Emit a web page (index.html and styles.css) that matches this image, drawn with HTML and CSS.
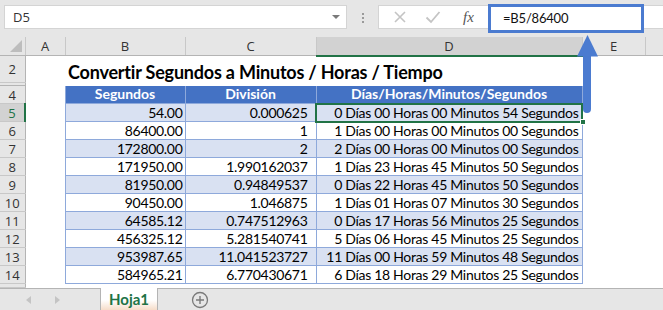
FILE: index.html
```html
<!DOCTYPE html>
<html lang="es">
<head>
    <meta charset="UTF-8">
    <title>Convertir Segundos</title>
    <link rel="stylesheet" href="styles.css">
</head>
<body>
    <div class="app">
        <div class="formula-bar">
            <div class="name-box">
                <span>D5</span>
                <span class="caret"></span>
            </div>
            <div class="grip"><i></i><i></i><i></i></div>
            <div class="fx-box">
                <svg width="14" height="14" viewBox="0 0 14 14"><path d="M2 2L12 12M12 2L2 12" stroke="#c4c4c4" stroke-width="1.6" fill="none"/></svg>
                <svg width="16" height="14" viewBox="0 0 16 14"><path d="M1.5 7.5L6 12L14.5 2" stroke="#c4c4c4" stroke-width="1.8" fill="none"/></svg>
                <span class="fx">fx</span>
            </div>
            <div class="formula-input">=B5/86400</div>
            <div class="formula-rest"></div>
        </div>

        <table class="sheet">
            <colgroup>
                <col class="c-rh"><col class="c-a"><col class="c-b"><col class="c-c"><col class="c-d"><col class="c-e"><col class="c-f">
            </colgroup>
            <tr class="col-heads">
                <th class="corner"><span class="tri"></span></th>
                <th>A</th><th>B</th><th>C</th><th class="active-col">D</th><th>E</th><th></th>
            </tr>
            <tr class="r-title">
                <th class="rh">2</th><td></td>
                <td class="title" colspan="3"><span>Convertir Segundos a Minutos / Horas / Tiempo</span></td>
                <td></td><td></td>
            </tr>
            <tr class="r-hidden"><th class="rh"></th><td colspan="6"></td></tr>
            <tr class="r-std">
                <th class="rh">4</th><td></td>
                <td class="tb-head">Segundos</td><td class="tb-head">División</td><td class="tb-head">Días/Horas/Minutos/Segundos</td>
                <td></td><td></td>
            </tr>
            <tr class="r-std band">
                <th class="rh active-row">5</th><td></td>
                <td class="num">54.00</td><td class="num div">0.000625</td><td class="num txt sel">0 Días 00 Horas 00 Minutos 54 Segundos<span class="handle"></span></td>
                <td></td><td></td>
            </tr>
            <tr class="r-std">
                <th class="rh">6</th><td></td>
                <td class="num">86400.00</td><td class="num div">1</td><td class="num txt">1 Días 00 Horas 00 Minutos 00 Segundos</td>
                <td></td><td></td>
            </tr>
            <tr class="r-std band">
                <th class="rh">7</th><td></td>
                <td class="num">172800.00</td><td class="num div">2</td><td class="num txt">2 Días 00 Horas 00 Minutos 00 Segundos</td>
                <td></td><td></td>
            </tr>
            <tr class="r-std">
                <th class="rh">8</th><td></td>
                <td class="num">171950.00</td><td class="num div">1.990162037</td><td class="num txt">1 Días 23 Horas 45 Minutos 50 Segundos</td>
                <td></td><td></td>
            </tr>
            <tr class="r-std band">
                <th class="rh">9</th><td></td>
                <td class="num">81950.00</td><td class="num div">0.94849537</td><td class="num txt">0 Días 22 Horas 45 Minutos 50 Segundos</td>
                <td></td><td></td>
            </tr>
            <tr class="r-std">
                <th class="rh">10</th><td></td>
                <td class="num">90450.00</td><td class="num div">1.046875</td><td class="num txt">1 Días 01 Horas 07 Minutos 30 Segundos</td>
                <td></td><td></td>
            </tr>
            <tr class="r-std band">
                <th class="rh">11</th><td></td>
                <td class="num">64585.12</td><td class="num div">0.747512963</td><td class="num txt">0 Días 17 Horas 56 Minutos 25 Segundos</td>
                <td></td><td></td>
            </tr>
            <tr class="r-std">
                <th class="rh">12</th><td></td>
                <td class="num">456325.12</td><td class="num div">5.281540741</td><td class="num txt">5 Días 06 Horas 45 Minutos 25 Segundos</td>
                <td></td><td></td>
            </tr>
            <tr class="r-std band">
                <th class="rh">13</th><td></td>
                <td class="num">953987.65</td><td class="num div">11.041523727</td><td class="num txt">11 Días 00 Horas 59 Minutos 48 Segundos</td>
                <td></td><td></td>
            </tr>
            <tr class="r-std">
                <th class="rh">14</th><td></td>
                <td class="num">584965.21</td><td class="num div">6.770430671</td><td class="num txt">6 Días 18 Horas 29 Minutos 25 Segundos</td>
                <td></td><td></td>
            </tr>
            <tr class="r-tail"><th class="rh"></th><td colspan="6"></td></tr>
        </table>

        <div class="tabs">
            <div class="tab-nav">
                <span class="nav-l"></span>
                <span class="nav-r"></span>
            </div>
            <div class="tab-active">Hoja1</div>
            <div class="tab-add">
                <svg width="18" height="18" viewBox="0 0 18 18">
                    <circle cx="9" cy="9" r="7.5" stroke="#7a7a7a" stroke-width="1.3" fill="none"/>
                    <path d="M9 5V13M5 9H13" stroke="#7a7a7a" stroke-width="1.4"/>
                </svg>
            </div>
        </div>

        <svg class="arrow" width="26" height="84" viewBox="0 0 26 84">
            <rect x="8" y="18" width="8" height="62" rx="4" fill="#4b7bd0"/>
            <polygon points="12.5,2 2,23.5 23,23.5" fill="#4b7bd0"/>
        </svg>
    </div>
</body>
</html>
```

FILE: styles.css
```css
* {
    margin: 0;
    padding: 0;
    box-sizing: border-box;
}

body {
    font-family: Lato, "Open Sans", sans-serif;
    background: #ffffff;
    color: #000000;
    width: 663px;
    height: 310px;
    overflow: hidden;
}

.app {
    position: relative;
    width: 663px;
    height: 310px;
    display: flex;
    flex-direction: column;
}

/* formula bar */

.formula-bar {
    display: flex;
    align-items: flex-start;
    height: 40px;
    background: #e6e6e6;
    padding-top: 4px;
}

.name-box {
    display: flex;
    align-items: center;
    justify-content: space-between;
    margin: 1px 0 0 4px;
    width: 343px;
    height: 24px;
    padding: 0 6px 0 8px;
    background: #ffffff;
    border: 1px solid #d4d4d4;
    font-family: "Open Sans", sans-serif;
    font-size: 13px;
    color: #333333;
}

.caret {
    width: 0;
    height: 0;
    border-left: 4px solid transparent;
    border-right: 4px solid transparent;
    border-top: 4px solid #7a7a7a;
}

.grip {
    display: flex;
    flex-direction: column;
    gap: 2px;
    width: 31px;
    align-items: center;
    padding-top: 9px;
}

.grip i {
    width: 2px;
    height: 2px;
    background: #9a9a9a;
}

.fx-box {
    display: flex;
    align-items: center;
    width: 110px;
    height: 24px;
    margin-top: 1px;
    padding-left: 14px;
    gap: 18px;
    background: #ffffff;
    border: 1px solid #d4d4d4;
    border-right: none;
}

.fx {
    font-family: "Liberation Serif", serif;
    font-style: italic;
    font-size: 15px;
    color: #555555;
    margin-left: 4px;
}

.formula-input {
    width: 156px;
    height: 29px;
    border: 3px solid #4b7bd0;
    background: #ffffff;
    padding-left: 12px;
    font-size: 13px;
    letter-spacing: -0.2px;
    line-height: 22px;
    color: #111111;
}

.formula-rest {
    flex: 1;
    height: 24px;
    margin-top: 1px;
    background: #ffffff;
    border-top: 1px solid #d4d4d4;
    border-bottom: 1px solid #d4d4d4;
}

/* grid */

.sheet {
    table-layout: fixed;
    border-collapse: collapse;
    width: 663px;
}

.c-rh { width: 25px; }
.c-a { width: 40px; }
.c-b { width: 120px; }
.c-c { width: 131px; }
.c-d { width: 266px; }
.c-e { width: 63px; }
.c-f { width: 18px; }

.sheet th {
    font-weight: normal;
    font-family: "Open Sans", sans-serif;
    font-size: 13px;
    color: #333333;
    background: #e6e6e6;
}

.col-heads {
    height: 19px;
}

.col-heads th {
    border-right: 1px solid #c8c8c8;
    border-bottom: 1px solid #b4b4b4;
    line-height: 18px;
}

.corner {
    position: relative;
}

.tri {
    position: absolute;
    right: 3px;
    bottom: 3px;
    width: 0;
    height: 0;
    border-left: 12px solid transparent;
    border-bottom: 12px solid #bdbdbd;
}

.col-heads .active-col {
    background: #d2d2d2;
    border-bottom: 2px solid #217346;
}

.rh {
    border-right: 1px solid #b4b4b4;
    border-bottom: 1px solid #c8c8c8;
    text-align: center;
    line-height: 16px;
}

.sheet th.active-row {
    background: #d2d2d2;
    border-right: 2px solid #217346;
    color: #217346;
}

.r-title { height: 24px; }
.r-hidden { height: 3px; }
.r-std { height: 18px; }
.r-tail { height: 4px; }

.r-hidden .rh {
    border-bottom: 1px solid #b4b4b4;
}

.sheet td {
    font-size: 14px;
    letter-spacing: -0.3px;
    line-height: 16px;
    white-space: nowrap;
    padding: 0;
}

.sheet td.title {
    overflow: visible;
    padding-left: 3px;
    font-size: 18px;
    letter-spacing: -0.2px;
    font-weight: bold;
}

.title span {
    display: block;
    line-height: 22px;
    padding-top: 4px;
}

.sheet td.tb-head {
    background: #4472c4;
    color: #ffffff;
    font-weight: bold;
    text-align: center;
    letter-spacing: 0;
    border-left: 1px solid #8ea9db;
    border-right: 1px solid #8ea9db;
}

.sheet td.num {
    text-align: right;
    padding-right: 2px;
    border: 1px solid #8ea9db;
}

.sheet td.div {
    padding-right: 8px;
}

.sheet td.txt {
    padding-right: 3px;
}

.band .num {
    background: #d9e1f2;
}

.sel {
    position: relative;
    outline: 2px solid #217346;
    outline-offset: -1px;
}

.handle {
    position: absolute;
    right: -4px;
    bottom: -4px;
    width: 6px;
    height: 6px;
    background: #217346;
    border: 1px solid #ffffff;
}

/* sheet tabs */

.tabs {
    flex: 1;
    display: flex;
    align-items: stretch;
    background: #e6e6e6;
    border-top: 1px solid #b4b4b4;
}

.tab-nav {
    width: 100px;
    display: flex;
    align-items: center;
    padding-left: 26px;
    gap: 24px;
}

.nav-l, .nav-r {
    width: 0;
    height: 0;
    border-top: 4px solid transparent;
    border-bottom: 4px solid transparent;
}

.nav-l { border-right: 5px solid #c4c4c4; }
.nav-r { border-left: 5px solid #c4c4c4; }

.tab-active {
    width: 58px;
    margin-top: -1px;
    text-align: center;
    font-size: 15px;
    font-weight: bold;
    line-height: 22px;
    color: #217346;
    background: linear-gradient(#ffffff 55%, #f6dcc8);
    border-left: 1px solid #b4b4b4;
    border-right: 1px solid #b4b4b4;
}

.tab-add {
    display: flex;
    align-items: center;
    padding-left: 33px;
}

/* callout arrow */

.arrow {
    position: absolute;
    left: 575px;
    top: 33px;
}
```
